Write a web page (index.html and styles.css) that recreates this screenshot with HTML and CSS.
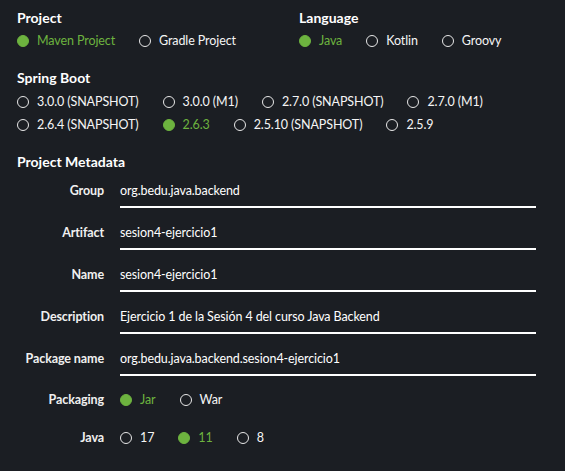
FILE: index.html
```html
<!DOCTYPE html>
<html lang="es">
<head>
<meta charset="utf-8">
<title>Spring Initializr</title>
<link rel="stylesheet" href="styles.css">
</head>
<body>
<main class="page">
  <div class="top">
    <section class="group">
      <h2 class="title">Project</h2>
      <div class="options">
        <label class="opt checked"><span class="radio"></span>Maven Project</label>
        <label class="opt"><span class="radio"></span>Gradle Project</label>
      </div>
    </section>
    <section class="group">
      <h2 class="title">Language</h2>
      <div class="options">
        <label class="opt checked"><span class="radio"></span>Java</label>
        <label class="opt"><span class="radio"></span>Kotlin</label>
        <label class="opt"><span class="radio"></span>Groovy</label>
      </div>
    </section>
  </div>

  <section class="group boot">
    <h2 class="title">Spring Boot</h2>
    <div class="options">
      <label class="opt"><span class="radio"></span>3.0.0 (SNAPSHOT)</label>
      <label class="opt"><span class="radio"></span>3.0.0 (M1)</label>
      <label class="opt"><span class="radio"></span>2.7.0 (SNAPSHOT)</label>
      <label class="opt"><span class="radio"></span>2.7.0 (M1)</label>
    </div>
    <div class="options row2">
      <label class="opt"><span class="radio"></span>2.6.4 (SNAPSHOT)</label>
      <label class="opt checked"><span class="radio"></span>2.6.3</label>
      <label class="opt"><span class="radio"></span>2.5.10 (SNAPSHOT)</label>
      <label class="opt"><span class="radio"></span>2.5.9</label>
    </div>
  </section>

  <section class="group meta">
    <h2 class="title">Project Metadata</h2>
    <div class="fields">
      <div class="field"><span class="label">Group</span><span class="value">org.bedu.java.backend</span></div>
      <div class="field"><span class="label">Artifact</span><span class="value">sesion4-ejercicio1</span></div>
      <div class="field"><span class="label">Name</span><span class="value">sesion4-ejercicio1</span></div>
      <div class="field"><span class="label">Description</span><span class="value">Ejercicio 1 de la Sesión 4 del curso Java Backend</span></div>
      <div class="field"><span class="label">Package name</span><span class="value">org.bedu.java.backend.sesion4-ejercicio1</span></div>
      <div class="field radios"><span class="label">Packaging</span>
        <div class="options">
          <label class="opt checked"><span class="radio"></span>Jar</label>
          <label class="opt"><span class="radio"></span>War</label>
        </div>
      </div>
      <div class="field radios"><span class="label">Java</span>
        <div class="options">
          <label class="opt"><span class="radio"></span>17</label>
          <label class="opt checked"><span class="radio"></span>11</label>
          <label class="opt"><span class="radio"></span>8</label>
        </div>
      </div>
    </div>
  </section>
</main>
</body>
</html>
```

FILE: styles.css
```css
* { box-sizing: border-box; }
html, body {
  margin: 0;
  background: #1b1e23;
}
body {
  font-family: "Lato", "Noto Sans", sans-serif;
  font-size: 12.5px;
  letter-spacing: -0.1px;
  color: #f5f5f5;
  width: 565px;
  height: 471px;
  overflow: hidden;
}
.page {
  padding: 8px 0 0 17px;
}
.top {
  display: grid;
  grid-template-columns: 282px 1fr;
}
.title {
  margin: 0;
  font-size: 14px;
  letter-spacing: 0;
  font-weight: 700;
  line-height: 20px;
  color: #ffffff;
}
.options {
  display: flex;
  align-items: center;
  margin-top: 3px;
}
.options.row2 { margin-top: 3px; }
.opt {
  display: flex;
  align-items: center;
  line-height: 20px;
  margin-right: 24px;
  white-space: nowrap;
}
.radio {
  width: 12px;
  height: 12px;
  border: 1.5px solid #e8e8e8;
  border-radius: 50%;
  margin-right: 8px;
  flex: none;
}
.opt.checked { color: #6db33f; }
.opt.checked .radio {
  background: #6db33f;
  border-color: #6db33f;
}
.boot { margin-top: 17px; }
.boot .options:first-of-type { margin-top: 4px; }
.meta { margin-top: 17px; }
.fields {
  display: flex;
  flex-direction: column;
  gap: 15px;
  margin-top: 9px;
}
.field {
  display: grid;
  grid-template-columns: 87px 416px;
  column-gap: 16px;
  align-items: start;
}
.label {
  text-align: right;
  line-height: 20px;
  font-weight: 700;
  color: #f0f0f0;
}
.value {
  line-height: 20px;
  padding-bottom: 5px;
  border-bottom: 2px solid #ffffff;
  color: #ffffff;
}
.field.radios .options { margin-top: 0; }
.fields .field.radios:nth-child(6) { margin-top: -1px; }
.fields .field.radios:nth-child(7) { margin-top: 3px; }
```
